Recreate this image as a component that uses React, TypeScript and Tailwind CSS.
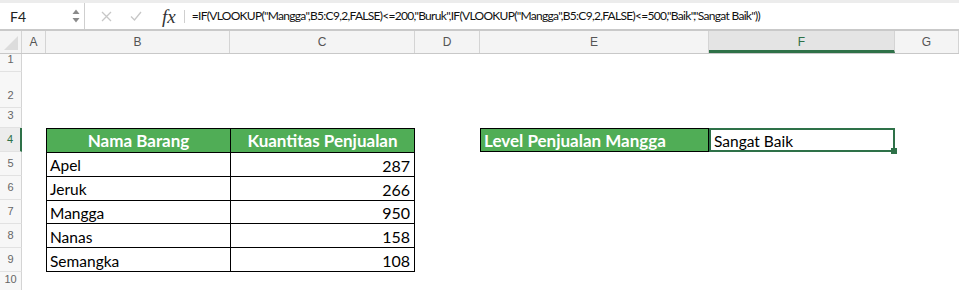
import React from "react";

const formula =
  '=IF(VLOOKUP("Mangga",B5:C9,2,FALSE)<=200,"Buruk",IF(VLOOKUP("Mangga",B5:C9,2,FALSE)<=500,"Baik","Sangat Baik"))';

const columns = [
  { name: "A", w: "w-[24px]" },
  { name: "B", w: "w-[184px]" },
  { name: "C", w: "w-[185px]" },
  { name: "D", w: "w-[65px]" },
  { name: "E", w: "w-[229px]" },
  { name: "F", w: "w-[186px]" },
  { name: "G", w: "flex-1" },
];

const rows = [1, 2, 3, 4, 5, 6, 7, 8, 9, 10];

const data = [
  { name: "Apel", qty: 287 },
  { name: "Jeruk", qty: 266 },
  { name: "Mangga", qty: 950 },
  { name: "Nanas", qty: 158 },
  { name: "Semangka", qty: 108 },
];

const cellFont = { fontFamily: "Lato, 'Open Sans', sans-serif" };

const FormulaBar = () => (
  <div className="border-t-[3px] border-[#ececec]">
    <div className="flex h-[26px] items-center bg-white">
      <div className="flex h-full w-[85px] items-center border-r border-[#cfcfcf] pl-[10px] pr-[4px]">
        <span className="flex-1 text-[14px] text-[#222]" style={cellFont}>
          F4
        </span>
        <svg width="8" height="16" viewBox="0 0 8 16">
          <path d="M0.5 6 L4 1.5 L7.5 6 Z" fill="#8a8a8a" />
          <path d="M0.5 10 L4 14.5 L7.5 10 Z" fill="#8a8a8a" />
        </svg>
      </div>
      <div className="flex items-center gap-[18px] pl-[16px]">
        <svg width="11" height="11" viewBox="0 0 11 11">
          <path d="M1 1 L10 10 M10 1 L1 10" stroke="#c7c7c7" strokeWidth="1.3" />
        </svg>
        <svg width="12" height="10" viewBox="0 0 12 10">
          <path d="M1 5.5 L4.5 9 L11 1" stroke="#c7c7c7" strokeWidth="1.3" fill="none" />
        </svg>
      </div>
      <span
        className="ml-[20px] text-[19px] italic leading-none text-[#333]"
        style={{ fontFamily: "'Liberation Serif', serif" }}
      >
        fx
      </span>
      <div className="ml-[8px] h-[13px] w-px bg-[#cfcfcf]" />
      <span
        className="ml-[7px] whitespace-nowrap text-[12px] tracking-[-0.7px] text-[#111]"
        style={cellFont}
      >
        {formula}
      </span>
    </div>
    <div className="h-[2px] border-t border-b border-[#c9c9c9] bg-[#f2f2f2]" />
  </div>
);

const ColumnHeader = () => (
  <div
    className="flex h-[23px] border-b border-[#c8c8c8] bg-[#f4f4f4] text-[12px] text-[#555]"
    style={{ fontFamily: "'Liberation Sans', Arial, sans-serif" }}
  >
    <div className="relative w-[22px] border-r border-[#d4d4d4]">
      <svg className="absolute bottom-[3px] right-[3px]" width="14" height="14" viewBox="0 0 14 14">
        <path d="M14 0 L14 14 L0 14 Z" fill="#dcdcdc" />
      </svg>
    </div>
    {columns.map((c) => (
      <div
        key={c.name}
        className={`${c.w} flex items-center justify-center border-r border-[#d4d4d4] ${
          c.name === "F"
            ? "border-b-[3px] border-b-[#2e7148] bg-[#e4e4e4] pt-[3px] text-[#2e7148]"
            : ""
        }`}
      >
        {c.name}
      </div>
    ))}
  </div>
);

const App = () => {
  return (
    <div className="h-[290px] w-[959px] overflow-hidden bg-white">
      <FormulaBar />
      <ColumnHeader />
      <div className="grid grid-cols-[22px_24px_184px_185px_65px_229px_186px_1fr] grid-rows-[18px_36px_20px_24px_24px_24px_24px_24px_24px_20px]">
        {rows.map((n, i) => (
          <div
            key={n}
            className={`col-start-1 flex items-end justify-center pb-[4px] text-[11px] ${
              n === 4
                ? "border-r-2 border-[#2e7148] bg-[#ececec] text-[#2e7148]"
                : "border-r border-[#d4d4d4] bg-[#f7f7f7] text-[#666]"
            } border-b border-b-[#e2e2e2]`}
            style={{ gridRowStart: i + 1, fontFamily: "'Liberation Sans', Arial, sans-serif" }}
          >
            {n}
          </div>
        ))}

        <div
          className="col-start-3 col-span-2 row-start-4 row-span-6 grid grid-cols-2 grid-rows-6 border-l border-t border-black text-[15.5px] leading-none text-black"
          style={cellFont}
        >
          <div className="flex items-center justify-center border-r border-b border-black bg-[#50ad56] pt-[1px] text-[17px] font-bold text-white">
            Nama Barang
          </div>
          <div className="flex items-center justify-center border-r border-b border-black bg-[#50ad56] pt-[1px] text-[17px] font-bold text-white">
            Kuantitas Penjualan
          </div>
          {data.map((d) => (
            <React.Fragment key={d.name}>
              <div className="flex items-end border-r border-b border-black pb-[2px] pl-[3px]">{d.name}</div>
              <div className="flex items-end justify-end border-r border-b border-black pb-[2px] pr-[4px] text-[16px]">
                {d.qty}
              </div>
            </React.Fragment>
          ))}
        </div>

        <div
          className="col-start-6 row-start-4 flex items-center border border-black bg-[#50ad56] pl-[3px] pt-[1px] text-[17px] font-bold text-white"
          style={cellFont}
        >
          Level Penjualan Mangga
        </div>
        <div
          className="relative col-start-7 row-start-4 flex items-end border-2 border-[#2e7148] pb-[1px] pl-[3px] text-[15.5px] leading-none text-black"
          style={cellFont}
        >
          Sangat Baik
          <span className="absolute -bottom-[4px] -right-[4px] h-[6px] w-[6px] bg-[#2e7148]" />
        </div>
      </div>
    </div>
  );
};

export default App;
